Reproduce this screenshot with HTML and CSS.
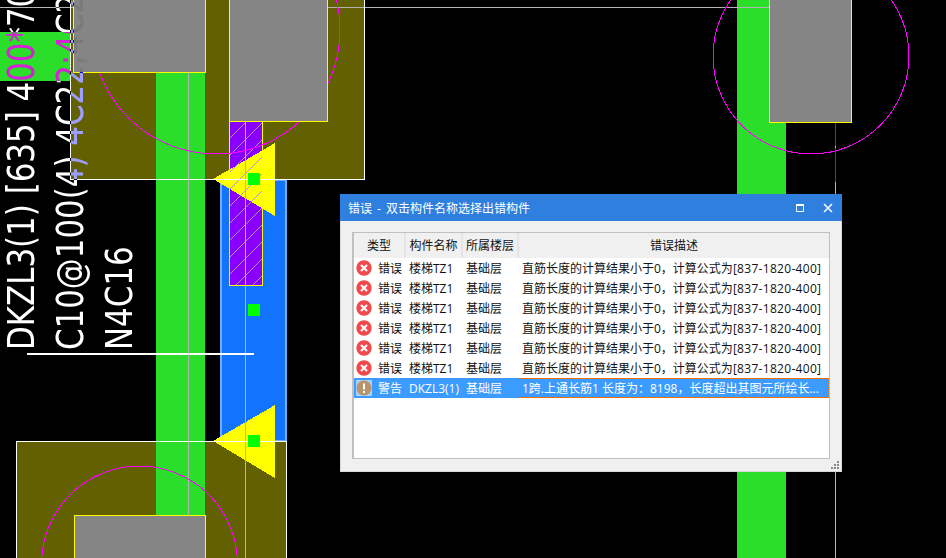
FILE: index.html
```html
<!DOCTYPE html>
<html lang="zh">
<head>
<meta charset="utf-8">
<title>错误</title>
<link rel="stylesheet" href="styles.css">
</head>
<body>
<main class="canvas">
<svg class="cad" width="946" height="558" viewBox="0 0 946 558" xmlns="http://www.w3.org/2000/svg">
  <defs>
    <clipPath id="hatchClip"><rect x="230" y="122" width="32" height="163"/></clipPath>
  </defs>
  <rect class="olive" x="70" y="0" width="295" height="179"/>
  <rect class="olive" x="16" y="441" width="271" height="117"/>
  <rect class="green" x="0" y="32" width="70" height="49"/>
  <rect class="green" x="156" y="72" width="49" height="443"/>
  <rect class="green" x="737" y="0" width="49" height="195"/>
  <rect class="green" x="737" y="472" width="49" height="86"/>
  <rect class="blue" x="221" y="179.500" width="65" height="261"/>
  <rect class="purple" x="229.500" y="121.500" width="33" height="164"/>
  <polygon class="tri" points="213,179 275,143 275,216"/>
  <polygon class="tri" points="213,441 275,405 275,478"/>
  <g clip-path="url(#hatchClip)" class="hatch">
    <path d="M230 138 L246 122 M230 155 L262 123 M230 172 L262 140 M230 189 L262 157 M230 206 L262 174 M230 223 L262 191 M230 240 L262 208 M230 257 L262 225 M230 274 L262 242 M235 286 L262 259 M252 286 L262 276"/>
  </g>
  <path class="line-gray" d="M0 7.500H73 M327 7.500H769 M188.500 72V515 M245.500 121V558 M835.500 146V148 M835.500 182V194 M835.500 472V558"/>
  <path class="line-red" d="M835.500 122V146 M835.500 148V182"/>
  <circle class="ring" cx="216" cy="30" r="124"/>
  <circle class="ring" cx="811" cy="56" r="98"/>
  <circle class="ring" cx="139.500" cy="564" r="98"/>
  <rect class="pier" x="73.500" y="-2" width="132" height="74"/>
  <rect class="pier" x="229.500" y="-2" width="98" height="123"/>
  <rect class="pier" x="769.500" y="-2" width="82" height="124"/>
  <rect class="pier" x="74.500" y="515.500" width="131" height="50"/>
  <path class="line-white" d="M70.500 0V179 M70 179.500H365 M364.500 0V179 M16.500 558V441.500H286.500V558"/>
  <rect class="node" x="248" y="173" width="12" height="12"/>
  <rect class="node" x="248" y="304" width="12" height="12"/>
  <rect class="node" x="248" y="435" width="12" height="12"/>
  <rect class="leader" x="27" y="353" width="227" height="2"/>
  <g class="labels">
    <text transform="translate(33.500,350) rotate(-90) scale(.835,1)">DKZL3(1) [635] 400*700</text>
    <text transform="translate(83,350) rotate(-90) scale(.835,1)">C10@100(4) 4C22;4C22</text>
    <text transform="translate(132,350) rotate(-90) scale(.835,1)">N4C16</text>
  </g>
</svg>

<section class="dialog">
  <header class="titlebar">
    <h1 class="title">错误 - 双击构件名称选择出错构件</h1>
    <svg class="win-icon" width="10" height="10" viewBox="0 0 10 10"><path d="M1.500 2.500H8.500V8.500H1.500Z" fill="none" stroke="#fff" stroke-width="1"/><path d="M1 2H9" stroke="#fff" stroke-width="2"/></svg>
    <svg class="win-icon close" width="10" height="10" viewBox="0 0 10 10"><path d="M1 1L9 9M9 1L1 9" fill="none" stroke="#fff" stroke-width="1.500"/></svg>
  </header>
  <div class="table">
    <div class="row head">
      <div class="cell">类型</div><div class="cell">构件名称</div><div class="cell">所属楼层</div><div class="cell">错误描述</div>
    </div>
    <div class="row"><div class="cell type"><svg class="ico" width="16" height="16" viewBox="0 0 16 16"><circle cx="8" cy="8" r="7.700" fill="#f04a4e"/><path d="M5 5L11 11M11 5L5 11" stroke="#fff" stroke-width="2"/></svg>错误</div><div class="cell">楼梯TZ1</div><div class="cell">基础层</div><div class="cell">直筋长度的计算结果小于0，计算公式为<span class="num">[837-1820-400]</span></div></div>
    <div class="row"><div class="cell type"><svg class="ico" width="16" height="16" viewBox="0 0 16 16"><circle cx="8" cy="8" r="7.700" fill="#f04a4e"/><path d="M5 5L11 11M11 5L5 11" stroke="#fff" stroke-width="2"/></svg>错误</div><div class="cell">楼梯TZ1</div><div class="cell">基础层</div><div class="cell">直筋长度的计算结果小于0，计算公式为<span class="num">[837-1820-400]</span></div></div>
    <div class="row"><div class="cell type"><svg class="ico" width="16" height="16" viewBox="0 0 16 16"><circle cx="8" cy="8" r="7.700" fill="#f04a4e"/><path d="M5 5L11 11M11 5L5 11" stroke="#fff" stroke-width="2"/></svg>错误</div><div class="cell">楼梯TZ1</div><div class="cell">基础层</div><div class="cell">直筋长度的计算结果小于0，计算公式为<span class="num">[837-1820-400]</span></div></div>
    <div class="row"><div class="cell type"><svg class="ico" width="16" height="16" viewBox="0 0 16 16"><circle cx="8" cy="8" r="7.700" fill="#f04a4e"/><path d="M5 5L11 11M11 5L5 11" stroke="#fff" stroke-width="2"/></svg>错误</div><div class="cell">楼梯TZ1</div><div class="cell">基础层</div><div class="cell">直筋长度的计算结果小于0，计算公式为<span class="num">[837-1820-400]</span></div></div>
    <div class="row"><div class="cell type"><svg class="ico" width="16" height="16" viewBox="0 0 16 16"><circle cx="8" cy="8" r="7.700" fill="#f04a4e"/><path d="M5 5L11 11M11 5L5 11" stroke="#fff" stroke-width="2"/></svg>错误</div><div class="cell">楼梯TZ1</div><div class="cell">基础层</div><div class="cell">直筋长度的计算结果小于0，计算公式为<span class="num">[837-1820-400]</span></div></div>
    <div class="row"><div class="cell type"><svg class="ico" width="16" height="16" viewBox="0 0 16 16"><circle cx="8" cy="8" r="7.700" fill="#f04a4e"/><path d="M5 5L11 11M11 5L5 11" stroke="#fff" stroke-width="2"/></svg>错误</div><div class="cell">楼梯TZ1</div><div class="cell">基础层</div><div class="cell">直筋长度的计算结果小于0，计算公式为<span class="num">[837-1820-400]</span></div></div>
    <div class="row selected"><div class="cell type"><svg class="ico" width="16" height="16" viewBox="0 0 16 16"><rect width="16" height="16" fill="#a9d2fb"/><circle cx="8" cy="8" r="7.500" fill="#b8946a"/><path d="M8 3.500V9.500M8 11V13" stroke="#fff" stroke-width="2"/></svg>警告</div><div class="cell">DKZL3(1)</div><div class="cell">基础层</div><div class="cell focus">1跨.上通长筋1 长度为：8198，长度超出其图元所绘长...</div></div>
  </div>
  <svg class="grip" width="10" height="10" viewBox="0 0 10 10"><path d="M7 1h2v2H7zM4 4h2v2H4zM7 4h2v2H7zM1 7h2v2H1zM4 7h2v2H4zM7 7h2v2H7z" fill="#8a8a8a"/></svg>
</section>
</main>
</body>
</html>
```
FILE: styles.css
```css
html, body {
  margin: 0;
  padding: 0;
  background: #000;
}
.canvas {
  position: relative;
  width: 946px;
  height: 558px;
  overflow: hidden;
  background: #000;
  font-family: "Open Sans", "Noto Sans CJK SC", sans-serif;
}
.cad {
  display: block;
  shape-rendering: crispEdges;
}
.olive { fill: #626000; }
.green { fill: #2ade2a; }
.blue { fill: #1273ff; stroke: #6ab0ff; stroke-width: 2; }
.purple { fill: #8a00ff; stroke: #ffff00; stroke-width: 1; }
.tri { fill: #ffff00; }
.hatch path { fill: none; stroke: #a898c8; stroke-width: 1; shape-rendering: auto; }
.line-gray { fill: none; stroke: #b4b4b4; stroke-width: 1; }
.line-red { fill: none; stroke: #d01010; stroke-width: 1; }
.ring { fill: none; stroke: #ff00ff; stroke-width: 1; }
.pier { fill: #858585; stroke: #ffff00; stroke-width: 1; }
.line-white { fill: none; stroke: #fff; stroke-width: 1; }
.node { fill: #00ff00; }
.leader { fill: #fff; }
.labels text {
  font-family: "DejaVu Sans", sans-serif;
  font-size: 37px;
  fill: #fff;
  mix-blend-mode: difference;
}

.dialog {
  position: absolute;
  left: 340px;
  top: 194px;
  width: 502px;
  height: 278px;
  box-sizing: border-box;
  display: flex;
  flex-direction: column;
  background: #f0f0f0;
  border: 1px solid #d8d8d8;
  border-top: 0;
}
.titlebar {
  display: flex;
  align-items: center;
  height: 27px;
  margin: 0 -1px;
  padding: 0 9px 0 8px;
  background: #2f80de;
  color: #fff;
  gap: 18px;
  flex: none;
}
.title {
  flex: 1;
  margin: 0;
  font-size: 12px;
  font-weight: 400;
  word-spacing: 2px;
  color: #fff;
}
.win-icon { display: block; }
.table {
  margin: 11px 11px 12px;
  flex: 1;
  background: #fff;
  border: 1px solid #c0c0c0;
  border-width: 1px 1px 1px 2px;
  font-size: 12px;
  color: #111;
}
.row {
  display: grid;
  grid-template-columns: 52px 57px 56px 1fr;
  height: 20px;
  line-height: 22px;
  white-space: nowrap;
}
.num { letter-spacing: .3px; }
.cell { padding-left: 3px; overflow: hidden; }
.cell:first-child { padding-left: 0; }
.head {
  height: 25px;
  line-height: 26px;
  background: #f0f0f0;
  text-align: center;
}
.head .cell {
  padding: 0;
  border-right: 2px solid #e4e4e4;
}
.head .cell:last-child { border-right: 0; }
.type { display: flex; align-items: flex-start; }
.ico { margin: 2px 6px 0 2px; flex: none; }
.selected { background: #3b9bff; color: #fff; }
.focus { outline: 1px dotted #f07000; outline-offset: -1px; }
.grip {
  position: absolute;
  right: 1px;
  bottom: 1px;
}
```
